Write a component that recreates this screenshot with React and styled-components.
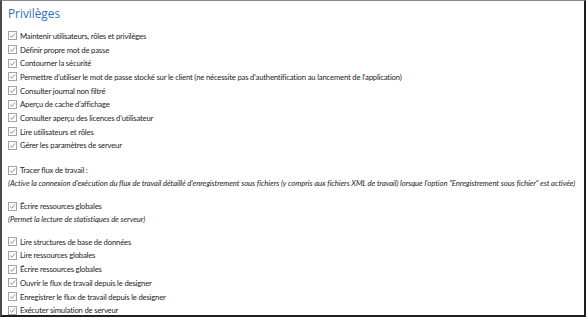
import React from "react";
import styled, { createGlobalStyle } from "styled-components";

const Global = createGlobalStyle`
  html, body { margin: 0; padding: 0; background: #fff; }
  body { font-family: "Lato", "Open Sans", sans-serif; }
`;

const Frame = styled.div`
  box-sizing: border-box;
  width: 586px;
  height: 317px;
  border-top: 1px solid #8a8a8a;
  border-left: 2px solid #4a4a4a;
  border-right: 2px solid #1e1e1e;
  border-bottom: 2px solid #1e1e1e;
  padding: 3px 0 0 6px;
  overflow: hidden;
  color: #1e1e1e;
`;

const Title = styled.h1`
  margin: 0 0 7px 0;
  font-family: "Open Sans", sans-serif;
  font-weight: 400;
  font-size: 11.8px;
  line-height: 18px;
  color: #2e6fb7;
`;

const Group = styled.div`
  display: flex;
  flex-direction: column;
  margin-top: ${(p) => p.$gap || 0}px;
`;

const Row = styled.div`
  display: flex;
  align-items: center;
  height: 13.7px;
  font-size: 7.7px;
  letter-spacing: -0.18px;
  white-space: nowrap;
`;

const Box = styled.span`
  box-sizing: border-box;
  width: 9px;
  height: 9px;
  border: 1px solid #a4a4a4;
  margin-right: 3px;
  display: inline-flex;
  align-items: center;
  justify-content: center;
  flex: none;
  background: #fff;
`;

const Note = styled.div`
  font-size: 7.7px;
  letter-spacing: -0.07px;
  font-style: italic;
  height: 13.7px;
  line-height: 13.7px;
  white-space: nowrap;
`;

const Check = () => (
  <Box>
    <svg width="7" height="7" viewBox="0 0 7 7">
      <path d="M1 3.6 L2.8 5.3 L6 1.4" fill="none" stroke="#858585" strokeWidth="0.9" />
    </svg>
  </Box>
);

const Item = ({ children }) => (
  <Row>
    <Check />
    <span>{children}</span>
  </Row>
);

const first = [
  "Maintenir utilisateurs, rôles et privilèges",
  "Définir propre mot de passe",
  "Contourner la sécurité",
  "Permettre d'utiliser le mot de passe stocké sur le client (ne nécessite pas d'authentification au lancement de l'application)",
  "Consulter journal non filtré",
  "Aperçu de cache d'affichage",
  "Consulter aperçu des licences d'utilisateur",
  "Lire utilisateurs et rôles",
  "Gérer les paramètres de serveur",
];

const last = [
  "Lire structures de base de données",
  "Lire ressources globales",
  "Écrire ressources globales",
  "Ouvrir le flux de travail depuis le designer",
  "Enregistrer le flux de travail depuis le designer",
  "Exécuter simulation de serveur",
];

export default function App() {
  return (
    <>
      <Global />
      <Frame>
        <Title>Privilèges</Title>
        <Group>
          {first.map((t) => (
            <Item key={t}>{t}</Item>
          ))}
        </Group>
        <Group $gap={11}>
          <Item>Tracer flux de travail :</Item>
          <Note>
            (Active la connexion d'exécution du flux de travail détaillé d'enregistrement sous fichiers (y compris aux fichiers XML de travail) lorsque l'option "Enregistrement sous fichier" est activée)
          </Note>
        </Group>
        <Group $gap={9}>
          <Item>Écrire ressources globales</Item>
          <Note>(Permet la lecture de statistiques de serveur)</Note>
        </Group>
        <Group $gap={8}>
          {last.map((t) => (
            <Item key={t}>{t}</Item>
          ))}
        </Group>
      </Frame>
    </>
  );
}
